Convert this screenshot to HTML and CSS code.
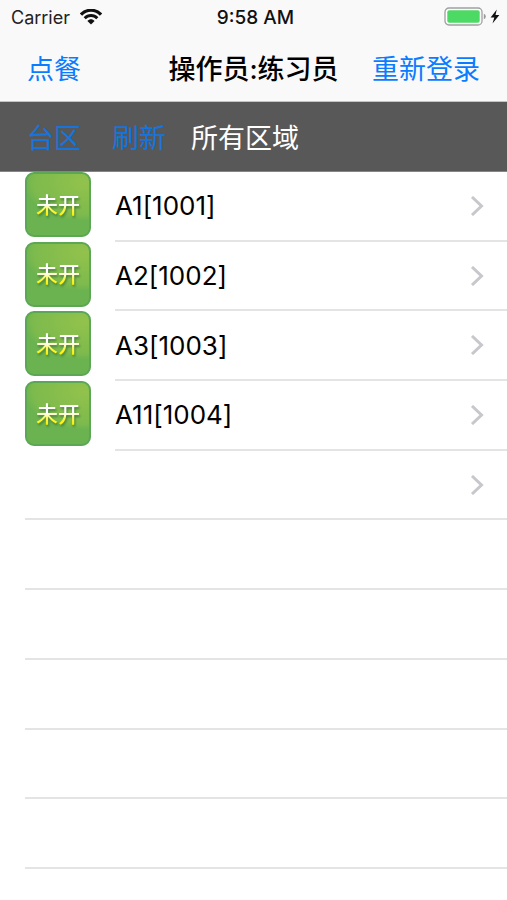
FILE: index.html
```html
<!DOCTYPE html>
<html lang="zh-CN">
<head>
<meta charset="utf-8">
<meta name="viewport" content="width=device-width, initial-scale=1">
<title>操作员</title>
<link rel="stylesheet" href="styles.css">
</head>
<body>
<header class="header">
  <div class="status">
    <div class="carrier">
      <span>Carrier</span>
      <svg class="wifi" viewBox="0 0 22 16" aria-hidden="true">
        <path d="M1 5.6C6.500-.2 15.500-.2 21 5.600" fill="none" stroke="#111" stroke-width="3.200"/>
        <path d="M4.700 9.300C8.200 5.600 13.800 5.600 17.300 9.300" fill="none" stroke="#111" stroke-width="2.900"/>
        <path d="M7.400 12C9.500 9.800 12.500 9.800 14.600 12L11 15.600Z" fill="#111"/>
      </svg>
    </div>
    <span class="time">9:58 AM</span>
    <svg class="battery" viewBox="0 0 56 20" aria-hidden="true">
      <rect x="1" y="1" width="37" height="17" rx="4" fill="#fff" stroke="#a0a0a0" stroke-width="1.300"/>
      <rect x="3.300" y="3.300" width="32.400" height="12.400" rx="2" fill="#4cd964"/>
      <path d="M39.800 6.800Q41.800 7.500 41.800 9.500T39.800 12.200Z" fill="#999"/>
      <path d="M52.800 2.500L46.600 10.600H50.300L48.500 16.500L55.400 7.900H51.500Z" fill="#111"/>
    </svg>
  </div>
  <nav class="navbar">
    <button class="link" type="button">点餐</button>
    <h1 class="title">操作员:练习员</h1>
    <button class="link relogin" type="button">重新登录</button>
  </nav>
</header>
<div class="toolbar">
  <button class="tool" type="button">台区</button>
  <button class="tool" type="button">刷新</button>
  <span class="area">所有区域</span>
</div>
<ul class="list">
  <li class="row"><span class="badge"><span class="badge-text">未开</span></span><a class="cell" href="#"><span>A1[1001]</span><svg class="chevron" viewBox="0 0 14 20" aria-hidden="true"><path d="M2 1L11.500 10L2 19"/></svg></a></li>
  <li class="row"><span class="badge"><span class="badge-text">未开</span></span><a class="cell" href="#"><span>A2[1002]</span><svg class="chevron" viewBox="0 0 14 20" aria-hidden="true"><path d="M2 1L11.500 10L2 19"/></svg></a></li>
  <li class="row"><span class="badge"><span class="badge-text">未开</span></span><a class="cell" href="#"><span>A3[1003]</span><svg class="chevron" viewBox="0 0 14 20" aria-hidden="true"><path d="M2 1L11.500 10L2 19"/></svg></a></li>
  <li class="row"><span class="badge"><span class="badge-text">未开</span></span><a class="cell" href="#"><span>A11[1004]</span><svg class="chevron" viewBox="0 0 14 20" aria-hidden="true"><path d="M2 1L11.500 10L2 19"/></svg></a></li>
  <li class="row"><a class="cell" href="#"><span></span><svg class="chevron" viewBox="0 0 14 20" aria-hidden="true"><path d="M2 1L11.500 10L2 19"/></svg></a></li>
  <li class="row"><span class="cell"></span></li>
  <li class="row"><span class="cell"></span></li>
  <li class="row"><span class="cell"></span></li>
  <li class="row"><span class="cell"></span></li>
  <li class="row"><span class="cell"></span></li>
</ul>
</body>
</html>
```

FILE: styles.css
```css
* {
  box-sizing: border-box;
}

body {
  margin: 0;
  background: #fff;
  color: #000;
  font-family: Inter, "Noto Sans CJK SC", sans-serif;
}

button {
  margin: 0;
  padding: 0;
  border: 0;
  background: none;
  font: inherit;
  color: #0a7cff;
}

.header {
  background: #f9f9f9;
  border-bottom: 1px solid #c4c4c4;
}

.status {
  display: grid;
  grid-template-columns: 1fr auto 1fr;
  align-items: center;
  height: 34px;
  padding: 0 7px 0 11px;
  font-size: 18px;
  color: #222;
}

.carrier {
  display: flex;
  align-items: center;
  gap: 10px;
}

.wifi {
  width: 22px;
  height: 16px;
}

.time {
  font-size: 19px;
  font-weight: 500;
  color: #111;
}

.battery {
  width: 56px;
  height: 20px;
  justify-self: end;
}

.navbar {
  display: grid;
  grid-template-columns: 1fr auto 1fr;
  align-items: center;
  height: 67px;
  padding: 0 27px;
  font-size: 27px;
}

.link {
  justify-self: start;
  white-space: nowrap;
}

.relogin {
  justify-self: end;
}

.title {
  margin: 0;
  font-size: 27px;
  font-weight: 500;
  white-space: nowrap;
}

.toolbar {
  display: flex;
  align-items: center;
  height: 70px;
  padding: 0 27px;
  background: #585858;
  border-bottom: 1px solid #858585;
  font-size: 27px;
}

.tool {
  margin-right: 31px;
  color: #1674dc;
}

.tool + .area {
  margin-left: -6px;
  color: #fff;
}

.list {
  display: grid;
  grid-template-rows: repeat(10, 1fr);
  min-height: 697px;
  margin: 0;
  padding: 0 0 0 25px;
  list-style: none;
}

.row {
  display: flex;
  min-width: 0;
}

.badge {
  display: flex;
  align-items: center;
  justify-content: center;
  width: 66px;
  height: 65px;
  margin-right: 24px;
  border: 2px solid #5ca755;
  border-radius: 9px;
  background: radial-gradient(ellipse 60px 38px at 92% 14%, #92c24c, #7dba4d 85%, #6bb350 100%);
}

.badge-text {
  font-size: 22px;
  font-weight: 500;
  line-height: 32px;
  color: transparent;
  background: linear-gradient(#fff 48%, #f8f860 62%, #fff200 80%);
  background-clip: text;
  -webkit-background-clip: text;
  filter: drop-shadow(1px 2px 1px #47803a);
}

.cell {
  display: flex;
  flex: 1;
  align-items: center;
  justify-content: space-between;
  padding-right: 23px;
  border-bottom: 2px solid #e4e4e5;
  font-size: 26px;
  font-feature-settings: "calt" 0;
  color: #000;
  text-decoration: none;
}

.chevron {
  width: 14px;
  height: 20px;
  fill: none;
  stroke: #c7c7cc;
  stroke-width: 3;
}
```
